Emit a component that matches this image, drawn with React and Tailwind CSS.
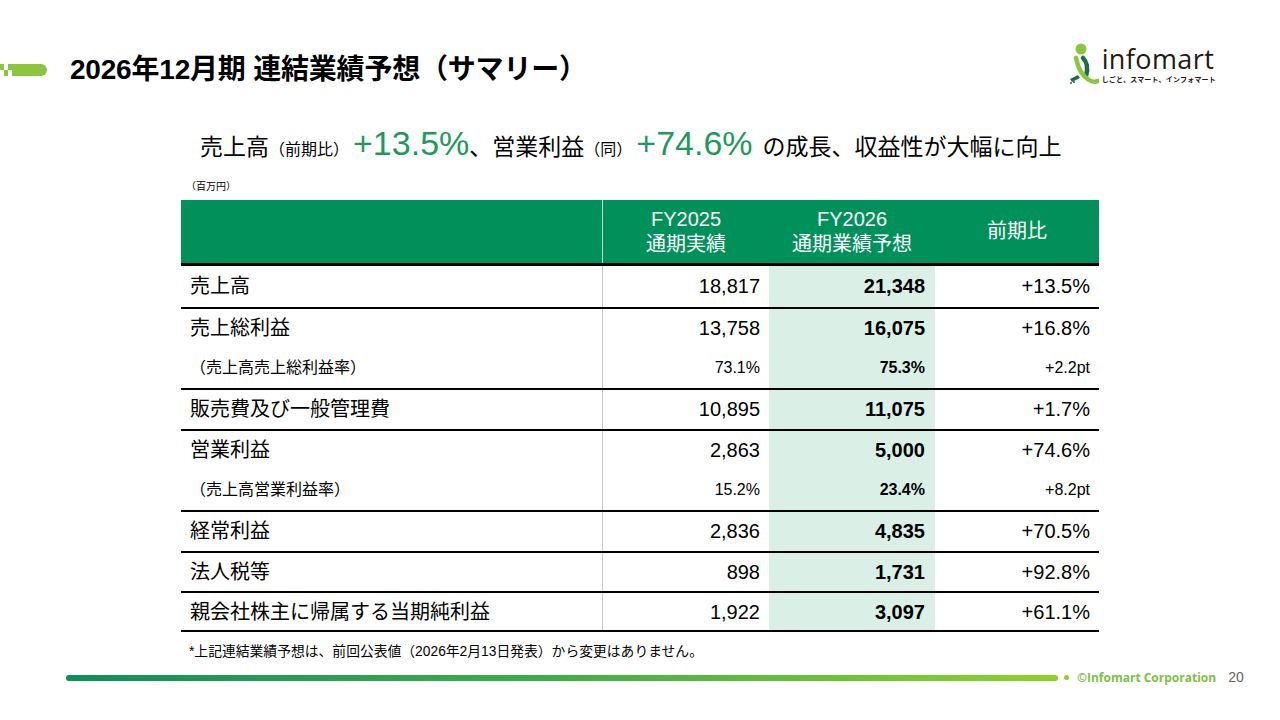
import React from 'react'

const JP = { fontFamily: '"Liberation Sans", Arial, "Noto Sans CJK JP", sans-serif' }

const rows = [
  { label: '売上高', a: '18,817', b: '21,348', c: '+13.5%', top: true },
  { label: '売上総利益', a: '13,758', b: '16,075', c: '+16.8%', top: true },
  { label: '（売上高売上総利益率）', a: '73.1%', b: '75.3%', c: '+2.2pt', sub: true },
  { label: '販売費及び一般管理費', a: '10,895', b: '11,075', c: '+1.7%', top: true },
  { label: '営業利益', a: '2,863', b: '5,000', c: '+74.6%', top: true },
  { label: '（売上高営業利益率）', a: '15.2%', b: '23.4%', c: '+8.2pt', sub: true },
  { label: '経常利益', a: '2,836', b: '4,835', c: '+70.5%', top: true },
  { label: '法人税等', a: '898', b: '1,731', c: '+92.8%', top: true },
  { label: '親会社株主に帰属する当期純利益', a: '1,922', b: '3,097', c: '+61.1%', top: true },
]

function LeftMark() {
  return (
    <svg width="48" height="14" viewBox="0 0 48 14">
      <rect x="0" y="1" width="4" height="6" fill="#8cc63f" />
      <rect x="4" y="7" width="4" height="6" fill="#8cc63f" />
      <rect x="8" y="1" width="4" height="6" fill="#8cc63f" />
      <path d="M12 1 H41 A6 6 0 0 1 41 13 H12 Z" fill="#8cc63f" />
    </svg>
  )
}

function Logo() {
  return (
    <div className="flex items-center gap-[3px]">
      <svg width="32" height="44" viewBox="0 0 32 44">
        <circle cx="14" cy="7" r="5.5" fill="#8cc63f" />
        <path d="M16 16 C20 20 21 27 19 34" stroke="#1c6b4a" strokeWidth="4.5" fill="none" strokeLinecap="round" />
        <path d="M9 16 C11 26 15 34 22 38 C25 40 28 40 31 39" stroke="#8cc63f" strokeWidth="4.5" fill="none" strokeLinecap="round" />
        <path d="M3 37 L11 33 L13 36 L5 40 Z" fill="#1c6b4a" />
        <circle cx="4" cy="41" r="1" fill="#1c6b4a" />
        <circle cx="7" cy="40" r="1" fill="#1c6b4a" />
      </svg>
      <div className="flex flex-col">
        <span className="text-[27px] leading-[28px] tracking-[0.4px] text-[#231815]" style={{ fontFamily: '"Open Sans", "Liberation Sans", sans-serif' }}>infomart</span>
        <span className="mt-[3px] text-[7px] leading-[8px] font-bold text-[#231815] tracking-[0.2px]" style={JP}>しごと、スマート、インフォマート</span>
      </div>
    </div>
  )
}

export default function App() {
  return (
    <div className="w-[1280px] h-[720px] bg-white flex flex-col overflow-hidden text-black" style={JP}>
      {/* header */}
      <div className="h-[105px] pt-[42px] flex justify-between">
        <div className="flex items-center h-[44px] mt-[6px]">
          <LeftMark />
          <h1 className="ml-[22px] text-[28px] font-bold tracking-[-0.2px]">2026年12月期 連結業績予想（サマリー）</h1>
        </div>
        <div className="mr-[64px]">
          <Logo />
        </div>
      </div>

      {/* headline */}
      <div className="h-[76px] flex items-center pl-[200px]">
        <p className="flex items-baseline whitespace-nowrap">
          <span className="text-[23px]">売上高</span>
          <span className="text-[16px]">（前期比）</span>
          <span className="text-[34px] text-[#1e9a5e] ml-[4px]">+13.5%</span>
          <span className="text-[23px]">、営業利益</span>
          <span className="text-[16px]">（同）</span>
          <span className="text-[34px] text-[#1e9a5e] ml-[4px]">+74.6%</span>
          <span className="text-[23px] ml-[10px]">の成長、収益性が大幅に向上</span>
        </p>
      </div>

      <div className="h-[19px] pl-[186px] text-[10px] leading-[12px]">（百万円）</div>

      {/* table */}
      <div className="ml-[181px] w-[918px]">
        <div className="grid grid-cols-[422px_166px_166px_164px] h-[66px] bg-[#00915a] text-white text-[20px] leading-[25px] border-b-[3px] border-black">
          <div className="border-r border-white/70" />
          <div className="flex flex-col items-center justify-center">
            <span>FY2025</span>
            <span>通期実績</span>
          </div>
          <div className="flex flex-col items-center justify-center">
            <span>FY2026</span>
            <span>通期業績予想</span>
          </div>
          <div className="flex items-center justify-center">前期比</div>
        </div>
        {rows.map((r, i) => (
          <div
            key={i}
            className={`grid grid-cols-[422px_166px_166px_164px] h-[40.67px] ${r.top && i > 0 ? 'border-t-2 border-black' : ''} ${i === rows.length - 1 ? 'border-b-2 border-black' : ''}`}
          >
            <div className={`flex items-center border-r border-[#c8c8c8] pl-[9px] ${r.sub ? 'text-[16px]' : 'text-[20px]'}`}>{r.label}</div>
            <div className={`flex items-center justify-end pr-[9px] ${r.sub ? 'text-[16px]' : 'text-[20px]'}`}>{r.a}</div>
            <div className={`flex items-center justify-end pr-[10px] bg-[#daefe6] font-bold ${r.sub ? 'text-[16px]' : 'text-[20px]'}`}>{r.b}</div>
            <div className={`flex items-center justify-end pr-[9px] ${r.sub ? 'text-[16px]' : 'text-[20px]'}`}>{r.c}</div>
          </div>
        ))}
      </div>

      <div className="h-[40px] flex items-center pl-[189px] text-[13.8px]">*上記連結業績予想は、前回公表値（2026年2月13日発表）から変更はありません。</div>

      {/* footer */}
      <div className="flex items-center h-[12px] pl-[66px]">
        <div className="w-[992px] h-[6px] rounded-full bg-gradient-to-r from-[#0a8f5a] via-[#3fae45] to-[#8cd321]" />
        <div className="ml-[6px] w-[5px] h-[5px] rounded-full bg-[#8cd321]" />
        <span className="ml-[8px] text-[12px] font-bold text-[#7cc242]" style={{ fontFamily: '"Open Sans", "Noto Sans", sans-serif' }}>©Infomart Corporation</span>
        <span className="ml-[12px] text-[14px] text-[#666]">20</span>
      </div>
    </div>
  )
}
